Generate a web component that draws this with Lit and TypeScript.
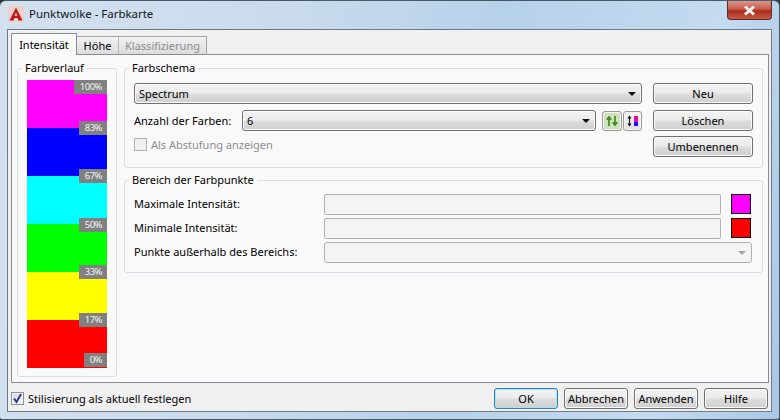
import { LitElement, html, css } from "lit";
import { customElement } from "lit/decorators.js";

const BANDS = ["#ff00ff", "#0000ff", "#00ffff", "#00ff00", "#ffff00", "#ff0000"];
const MARKS: [string, number][] = [
  ["100%", 0], ["83%", 41], ["67%", 89], ["50%", 138], ["33%", 185], ["17%", 233], ["0%", 273],
];

@customElement("app-root")
export class AppRoot extends LitElement {
  static styles = css`
    :host { display: block; width: 780px; height: 420px; overflow: hidden; background: #30363c;
      font: 11px/14px "Noto Sans", "Open Sans", sans-serif; color: #000; }
    * { box-sizing: border-box; }
    .window { width: 780px; height: 420px; margin-top: 0; border-radius: 6px 6px 3px 3px;
      border: 1px solid #4a5a68; border-width: 1px 1px 1px 0;
      background: linear-gradient(100deg, #d3e1ef 0%, #c9dbec 35%, #b6d1ea 60%, #c4dbf0 85%, #a9c7e6 100%);
      display: flex; flex-direction: column; position: relative; }
    .titlebar { height: 28px; display: flex; align-items: center; padding: 0 0 2px 8px; gap: 5px; flex: none; }
    .title { color: #101820; font-size: 11.45px; }
    .close { position: absolute; right: 7px; top: 0; width: 45px; height: 19px; border: 1px solid #5a2a24;
      border-top: 0; border-radius: 0 0 4px 4px;
      background: linear-gradient(#d9988c 0%, #c9594a 45%, #a82c1c 55%, #c85a45 100%);
      display: flex; align-items: center; justify-content: center; }
    .client { margin-left: 7px; width: 765px; height: 383px; border: 1px solid #6e7a84; background: #f0f0f0;
      padding: 3px 2px 0 3px; display: flex; flex-direction: column; flex: none; }
    .tabs { display: flex; height: 21px; flex: none; align-items: flex-end; }
    .tab { height: 18px; border: 1px solid #a0a4a8; border-bottom: 0; display: flex; align-items: center;
      justify-content: center; background: linear-gradient(#f2f2f2, #dcdcdc); margin-left: -1px; }
    .tab.active { height: 22px; width: 66px; margin: 0 0 -1px 0; background: #f9f9f9; border-color: #898c95;
      position: relative; z-index: 1; }
    .tab.hoehe { width: 42px; margin-left: 0; border-left: 0; padding-top: 1px; }
    .tab.klass { width: 89px; color: #8d8d8d; border-left: 1px solid #b5b8ba; padding-top: 1px; }
    .pane { width: 758px; height: 329px; flex: none; border: 1px solid #898c95; background: #f9f9f9;
      padding: 6px 6px 0 5px; display: flex; gap: 7px; }
    fieldset { margin: 0; padding: 0; min-width: 0; border: 1px solid #d5dfe5; border-radius: 3px; }
    legend { margin-left: 4px; padding: 0 3px; height: 14px; line-height: 14px; }
    .left { width: 100px; height: 316px; flex: none; }
    .ramp-wrap { padding: 5px 9px 8px; }
    .ramp { position: relative; width: 80px; height: 287px; display: flex; flex-direction: column; }
    .band { height: 48px; flex: none; }
    .band:last-of-type { height: 47px; }
    .mark { position: absolute; right: 0; height: 14px; padding: 0 5px 0 6px; background: #808080; color: #f4f4f4;
      font-size: 9.5px; letter-spacing: -0.5px; line-height: 14px; }
    .right { width: 639px; display: flex; flex-direction: column; gap: 5px; flex: none; }
    .scheme { height: 107px; }
    .scheme-in { display: flex; gap: 11px; padding: 8px 0 0 9px; }
    .scheme-left { width: 508px; display: flex; flex-direction: column; gap: 6px; }
    .row { display: flex; align-items: center; }
    .count-label { width: 108px; flex: none; }
    .scheme-btns { width: 100px; display: flex; flex-direction: column; gap: 6px; }
    .scheme-btns .btn:last-child { margin-top: -1px; }
    .btn { height: 21px; border: 1px solid #707070; border-radius: 3px; display: flex; align-items: center;
      justify-content: center; box-shadow: inset 0 0 0 1px #fbfbfb;
      background: linear-gradient(#f3f3f3 0%, #ebebeb 48%, #dddddd 52%, #cfcfcf 100%); }
    .combo { height: 21px; border: 1px solid #707070; border-radius: 3px; display: flex; align-items: center;
      justify-content: space-between; padding: 0 4px 0 4px; box-shadow: inset 0 0 0 1px #fbfbfb;
      background: linear-gradient(#f3f3f3 0%, #ebebeb 48%, #dddddd 52%, #cfcfcf 100%); }
    .combo.wide { width: 508px; }
    .combo.count { width: 354px; }
    .arrow { width: 0; height: 0; border: 4px solid transparent; border-top: 4px solid #111; border-bottom: 0; margin-right: 1px; }
    .iconbtn { width: 20px; height: 20px; border: 1px solid #9a9a9a; border-radius: 3px; display: flex;
      align-items: center; justify-content: center; flex: none; box-shadow: inset 0 0 0 1px #f6f6f6; }
    .iconbtn.sort { margin-left: 6px; background: #cfe0bc; }
    .iconbtn.flip { margin-left: 1px; width: 19px; background: linear-gradient(#f5f5f5, #dedede); }
    .check-row { display: flex; align-items: center; gap: 4px; height: 17px; margin-top: -1px; }
    .box { width: 13px; height: 13px; flex: none; border: 1px solid #8e8f8f; background: linear-gradient(135deg, #ced3e2, #fdfdfd);
      display: flex; align-items: center; justify-content: center; box-shadow: inset 0 0 0 1px #f4f4f4; }
    .box.off { border-color: #b1b1b1; background: #f0f0f0; box-shadow: none; }
    .muted { color: #8d8d8d; }
    .range { height: 100px; }
    .range-in { display: grid; grid-template-columns: 190px 397px 10px 20px 1fr; row-gap: 3px;
      padding: 7px 0 0 9px; align-items: start; }
    .lbl { grid-column: 1; height: 21px; line-height: 20px; }
    .input { grid-column: 2; height: 21px; border: 1px solid #adb2b5; border-radius: 2px; background: #f4f4f4; }
    .swatch { grid-column: 4; width: 20px; height: 20px; border: 1px solid #000; }
    .dis-combo { grid-column: 2 / 5; width: 428px; height: 21px; border: 1px solid #adb2b5; border-radius: 3px;
      background: #f4f4f4; display: flex; align-items: center; justify-content: flex-end; padding-right: 4px; }
    .dis-combo .arrow { border-top-color: #a6a6a6; }
    .footer { display: flex; justify-content: space-between; align-items: center; height: 21px; margin-top: 5px; padding-right: 1px; flex: none; }
    .footer .check-row { margin: 0; }
    .actions { display: flex; gap: 6px; }
    .actions .btn { width: 64px; }
    .btn.default { border-color: #3c7fb1; box-shadow: inset 0 0 0 1px #a8e4f6; }
  `;

  render() {
    return html`<div class="window">
      <div class="titlebar">
        <svg width="16" height="16" viewBox="0 0 16 16">
          <rect width="16" height="16" fill="#f0d0cc"/>
          <path d="M8 1.5 L14.5 14.5 H10.5 L9.6 12 H6.4 L5.5 14.5 H1.5 Z" fill="#c01818"/>
          <path d="M8 6 L9.3 10 H6.7 Z" fill="#f4c8c0"/>
        </svg>
        <span class="title">Punktwolke - Farbkarte</span>
      </div>
      <div class="close">
        <svg width="13" height="11" viewBox="0 0 13 11"><path d="M2 1.5 L11 9.5 M11 1.5 L2 9.5" stroke="#f4f4f4" stroke-width="3"/></svg>
      </div>
      <div class="client">
        <div class="tabs">
          <div class="tab active">Intensität</div>
          <div class="tab hoehe">Höhe</div>
          <div class="tab klass">Klassifizierung</div>
        </div>
        <div class="pane">
          <fieldset class="left">
            <legend>Farbverlauf</legend>
            <div class="ramp-wrap">
              <div class="ramp">
                ${BANDS.map((c) => html`<div class="band" style="background:${c}"></div>`)}
                ${MARKS.map(([t, y]) => html`<div class="mark" style="top:${y}px">${t}</div>`)}
              </div>
            </div>
          </fieldset>
          <div class="right">
            <fieldset class="scheme">
              <legend>Farbschema</legend>
              <div class="scheme-in">
                <div class="scheme-left">
                  <div class="combo wide"><span>Spectrum</span><span class="arrow"></span></div>
                  <div class="row">
                    <span class="count-label">Anzahl der Farben:</span>
                    <div class="combo count"><span>6</span><span class="arrow"></span></div>
                    <div class="iconbtn sort">
                      <svg width="12" height="10" viewBox="0 0 12 10"><path d="M3 10V2 M0.8 3.8 L3 1 L5.2 3.8 M9 0V8 M6.8 6.2 L9 9 L11.2 6.2" fill="none" stroke="#3d8a1e" stroke-width="1.7"/></svg>
                    </div>
                    <div class="iconbtn flip">
                      <svg width="12" height="12" viewBox="0 0 12 12">
                        <path d="M2.5 2V10 M1 3.5 L2.5 1.5 L4 3.5 M1 8.5 L2.5 10.5 L4 8.5" fill="none" stroke="#111" stroke-width="1.1"/>
                        <rect x="7" y="1" width="4" height="3" fill="#f01060"/>
                        <rect x="7" y="4" width="4" height="3" fill="#d010e0"/>
                        <rect x="7" y="7" width="4" height="4" fill="#2a10f0"/>
                      </svg>
                    </div>
                  </div>
                  <div class="check-row"><span class="box off"></span><span class="muted">Als Abstufung anzeigen</span></div>
                </div>
                <div class="scheme-btns">
                  <div class="btn">Neu</div>
                  <div class="btn">Löschen</div>
                  <div class="btn">Umbenennen</div>
                </div>
              </div>
            </fieldset>
            <fieldset class="range">
              <legend>Bereich der Farbpunkte</legend>
              <div class="range-in">
                <div class="lbl">Maximale Intensität:</div><div class="input"></div><div class="swatch" style="background:#ff00ff"></div>
                <div class="lbl">Minimale Intensität:</div><div class="input"></div><div class="swatch" style="background:#ff0000"></div>
                <div class="lbl">Punkte außerhalb des Bereichs:</div><div class="dis-combo"><span class="arrow"></span></div>
              </div>
            </fieldset>
          </div>
        </div>
        <div class="footer">
          <div class="check-row">
            <span class="box"><svg width="11" height="11" viewBox="0 0 11 11"><path d="M2 5.5 L4.5 9 L9 1" fill="none" stroke="#2c3a90" stroke-width="2"/></svg></span>
            <span>Stilisierung als aktuell festlegen</span>
          </div>
          <div class="actions">
            <div class="btn default">OK</div>
            <div class="btn">Abbrechen</div>
            <div class="btn">Anwenden</div>
            <div class="btn">Hilfe</div>
          </div>
        </div>
      </div>
    </div>`;
  }
}
